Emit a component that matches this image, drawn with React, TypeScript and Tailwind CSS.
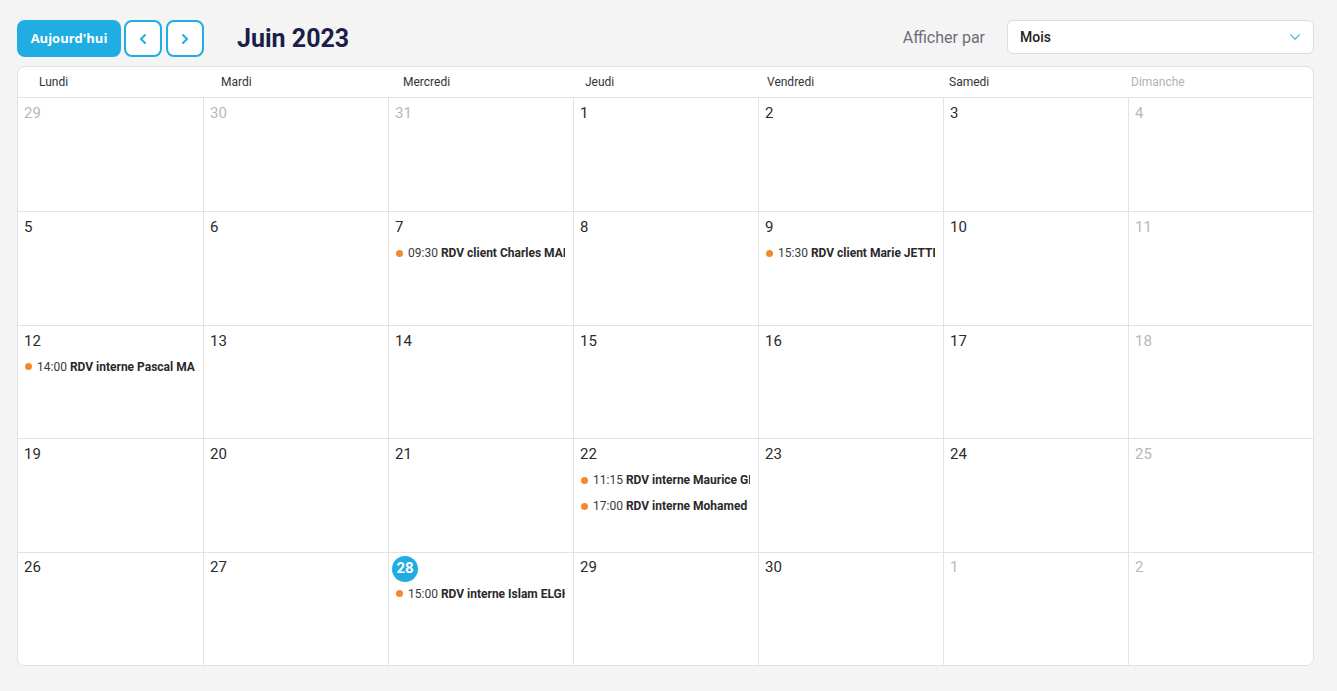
import { ChevronLeft, ChevronRight, ChevronDown } from "lucide-react";

type Ev = { time: string; title: string };
type Day = { n: number; muted?: boolean; today?: boolean; events?: Ev[] };

const dayNames = ["Lundi", "Mardi", "Mercredi", "Jeudi", "Vendredi", "Samedi", "Dimanche"];

const weeks: Day[][] = [
  [{ n: 29, muted: true }, { n: 30, muted: true }, { n: 31, muted: true }, { n: 1 }, { n: 2 }, { n: 3 }, { n: 4, muted: true }],
  [
    { n: 5 },
    { n: 6 },
    { n: 7, events: [{ time: "09:30", title: "RDV client Charles MAILLARD" }] },
    { n: 8 },
    { n: 9, events: [{ time: "15:30", title: "RDV client Marie JETTEUR" }] },
    { n: 10 },
    { n: 11, muted: true },
  ],
  [
    { n: 12, events: [{ time: "14:00", title: "RDV interne Pascal MARTIN" }] },
    { n: 13 },
    { n: 14 },
    { n: 15 },
    { n: 16 },
    { n: 17 },
    { n: 18, muted: true },
  ],
  [
    { n: 19 },
    { n: 20 },
    { n: 21 },
    {
      n: 22,
      events: [
        { time: "11:15", title: "RDV interne Maurice GRANGER" },
        { time: "17:00", title: "RDV interne Mohamed TAHIRI" },
      ],
    },
    { n: 23 },
    { n: 24 },
    { n: 25, muted: true },
  ],
  [
    { n: 26 },
    { n: 27 },
    { n: 28, today: true, events: [{ time: "15:00", title: "RDV interne Islam ELGHAZI" }] },
    { n: 29 },
    { n: 30 },
    { n: 1, muted: true },
    { n: 2, muted: true },
  ],
];

function Cell({ day, col, row }: { day: Day; col: number; row: number }) {
  return (
    <div
      className={[
        "min-w-0 overflow-hidden bg-white",
        col > 0 ? "border-l border-[#e3e3e3]" : "",
        row > 0 ? "border-t border-[#e3e3e3]" : "",
      ].join(" ")}
    >
      <div className="ml-[3px] mt-[3px] flex h-[26px]">
        {day.today ? (
          <span className="flex h-[26px] w-[26px] items-center justify-center rounded-full bg-[#1fade3] text-[15px] font-bold text-white">
            {day.n}
          </span>
        ) : (
          <span
            className={[
              "flex h-[24px] items-center pl-[3px] text-[15px]",
              day.muted ? "text-[#b8b8b8]" : "text-[#2b2b2b]",
            ].join(" ")}
          >
            {day.n}
          </span>
        )}
      </div>
      <div className="mt-[2px] flex flex-col gap-[6px] pl-[7px] pr-2">
        {day.events?.map((e) => (
          <div key={e.time} className="flex h-5 items-center gap-[5px] whitespace-nowrap text-[12px] leading-5">
            <span className="h-[7px] w-[7px] shrink-0 rounded-full bg-[#f28a2c]" />
            <span className="overflow-hidden text-[#3a3a3a]">
              {e.time} <span className="font-bold text-[#2a2a2a]">{e.title}</span>
            </span>
          </div>
        ))}
      </div>
    </div>
  );
}

export default function App() {
  return (
    <div
      className="min-h-screen w-full bg-[#f4f4f4] pl-[17px] pr-[23px] pt-[20px]"
      style={{ fontFamily: "Roboto, 'Liberation Sans', sans-serif" }}
    >
      {/* Toolbar */}
      <div className="flex h-[37px] items-center">
        <button
          className="h-[37px] w-[104px] rounded-lg bg-[#1fade3] text-[13px] font-bold text-white"
          style={{ fontFamily: "'Open Sans', sans-serif" }}
        >
          Aujourd'hui
        </button>
        <button className="ml-[3px] flex h-[37px] w-[38px] items-center justify-center rounded-lg border-2 border-[#1fade3] bg-white text-[#1fade3]">
          <ChevronLeft className="h-4 w-4" strokeWidth={3} />
        </button>
        <button className="ml-[4px] flex h-[37px] w-[38px] items-center justify-center rounded-lg border-2 border-[#1fade3] bg-white text-[#1fade3]">
          <ChevronRight className="h-4 w-4" strokeWidth={3} />
        </button>
        <h1 className="ml-[33px] text-[25px] font-bold text-[#1b1f48]">Juin 2023</h1>
        <div className="ml-auto flex items-center self-start">
          <span className="mt-[2px] text-[16px] text-[#6b6e78]">Afficher par</span>
          <div className="ml-[22px] flex h-[34px] w-[307px] items-center justify-between rounded-md border border-[#dcdcdc] bg-white pl-3 pr-[9px]">
            <span className="text-[14px] font-medium text-[#222]">Mois</span>
            <ChevronDown className="h-[18px] w-[18px] text-[#4db6e0]" strokeWidth={1.5} />
          </div>
        </div>
      </div>

      {/* Calendar */}
      <div className="mt-[9px] flex h-[600px] flex-col overflow-hidden rounded-lg border border-[#e1e1e1] bg-white">
        <div className="grid h-[31px] shrink-0 grid-cols-7 items-center border-b border-[#e3e3e3] pl-[21px]">
          {dayNames.map((d) => (
            <span key={d} className={["text-[12px]", d === "Dimanche" ? "text-[#b3b3b3]" : "text-[#333]"].join(" ")}>
              {d}
            </span>
          ))}
        </div>
        <div className="grid flex-1 grid-cols-7 grid-rows-5">
          {weeks.map((w, r) => w.map((d, c) => <Cell key={`${r}-${c}`} day={d} col={c} row={r} />))}
        </div>
      </div>
    </div>
  );
}
